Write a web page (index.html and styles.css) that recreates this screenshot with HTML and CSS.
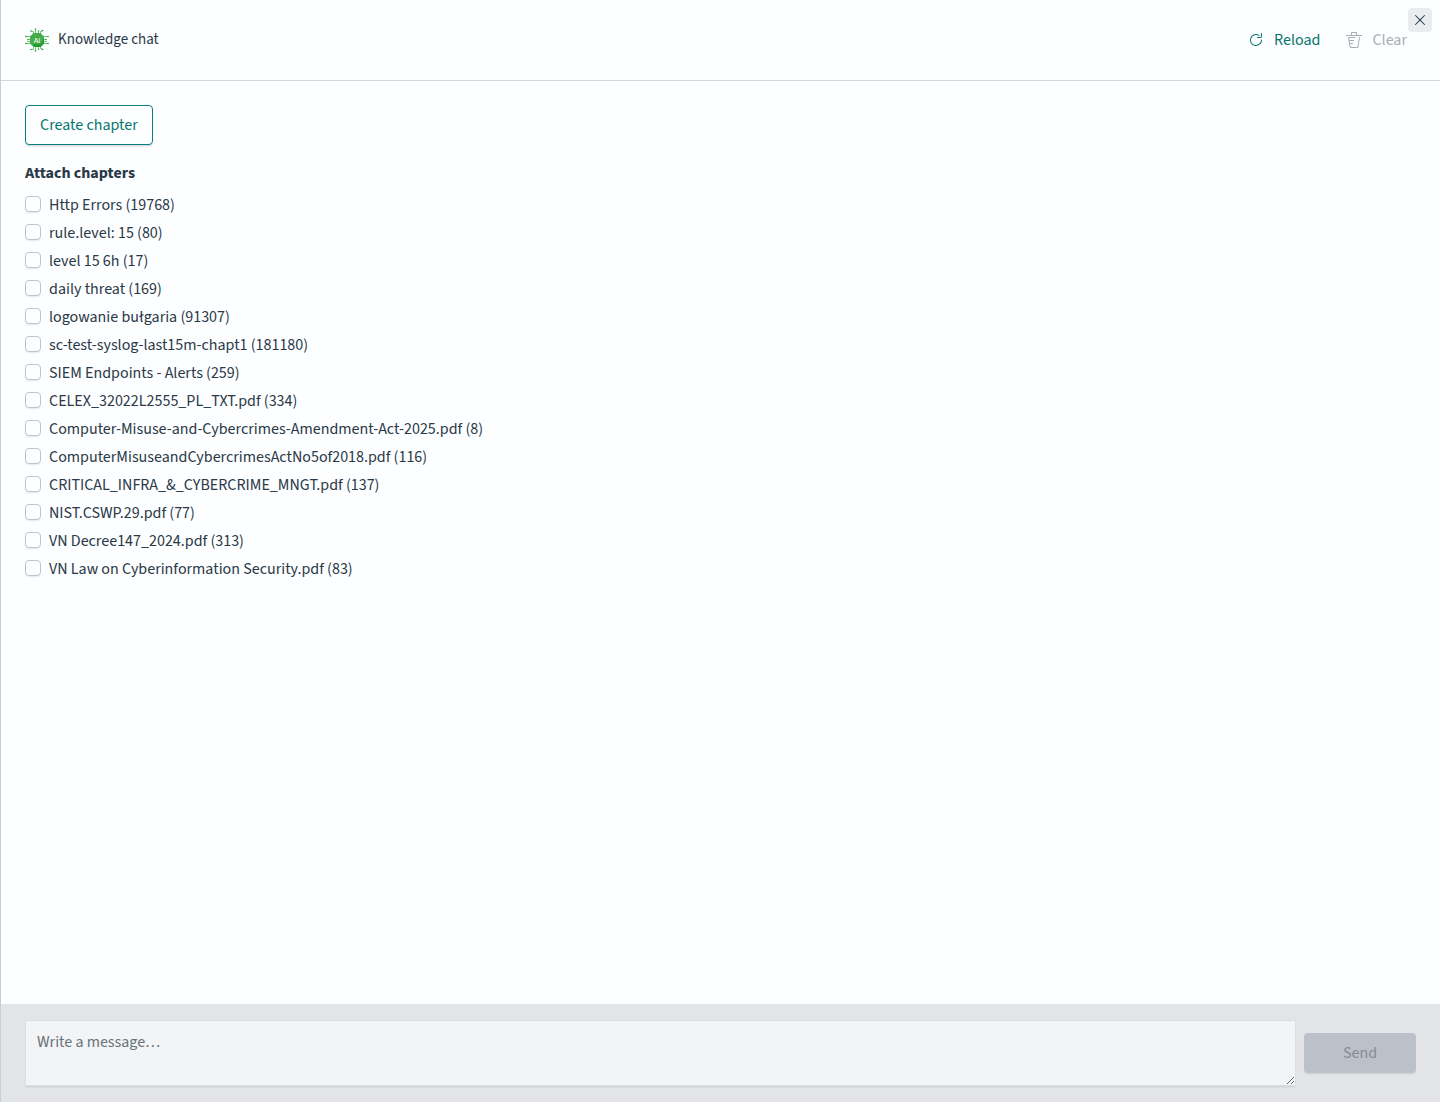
FILE: index.html
```html
<!DOCTYPE html>
<html lang="en">
<head>
  <meta charset="UTF-8" />
  <meta name="viewport" content="width=device-width, initial-scale=1" />
  <title>Knowledge chat</title>
  <link rel="stylesheet" href="styles.css">
</head>
<body>

<div class="flyout">
  <button type="button" class="close" aria-label="Close">
    <svg width="16" height="16" viewBox="0 0 16 16" fill="currentColor"><path d="M7.293 8 3.146 3.854a.5.5 0 1 1 .708-.708L8 7.293l4.146-4.147a.5.5 0 0 1 .708.708L8.707 8l4.147 4.146a.5.5 0 0 1-.708.708L8 8.707l-4.146 4.147a.5.5 0 0 1-.708-.708L7.293 8z"/></svg>
  </button>

  <header>
    <svg class="logo" width="24" height="24" viewBox="0 0 24 24" aria-hidden="true">
      <g fill="none" stroke="#4fb558" stroke-width=".8">
        <path d="M10.500 6V1M13.500 6V3.500M8.500 6V3.500H6.500M15.500 6V3.500H17V2"/>
        <path d="M10.500 18v5M13.500 18v2.500M8.500 18v3.500H6.500M15.500 18v2.500H17V22"/>
        <path d="M0 8.500h6M3 11.500h3M2 13.500h4M6 15.500H1"/>
        <path d="M18 8.500h5M18 11.500h3M18 13.500h4M18 15.500h5"/>
      </g>
      <g fill="#2c9a3a">
        <circle cx="10.500" cy="1" r=".8"/><circle cx="13.500" cy="3" r=".8"/><circle cx="6" cy="3" r=".8"/><circle cx="17.500" cy="2.500" r=".8"/>
        <circle cx="10.500" cy="23" r=".8"/><circle cx="13.500" cy="21" r=".8"/><circle cx="6" cy="21.500" r=".8"/><circle cx="17.500" cy="21.500" r=".8"/>
        <circle cx="1" cy="8.500" r=".8"/><circle cx="3" cy="11.500" r=".8"/><circle cx="1" cy="15.500" r=".8"/>
        <circle cx="23" cy="8.500" r=".8"/><circle cx="21" cy="11.500" r=".8"/><circle cx="23" cy="15.500" r=".8"/>
      </g>
      <path fill="#45ad49" d="M8.500 5h7L19 8.500v7L15.500 19h-7L5 15.500v-7z"/>
      <path fill="#239a35" d="M19 10v5.500L15.500 19H10l-2-3h8z"/>
      <text class="logo-text" x="12" y="15" text-anchor="middle">AI</text>
    </svg>
    <h1>Knowledge chat</h1>
    <div class="actions">
      <button type="button" class="btn-empty">
        <svg width="16" height="16" viewBox="0 0 16 16" fill="currentColor"><path d="M11.228 2.942a.5.5 0 1 1-.538.842A5 5 0 1 0 13 8a.5.5 0 1 1 1 0 6 6 0 1 1-2.772-5.058zM14 1.500v3A1.500 1.500 0 0 1 12.500 6h-3a.5.5 0 0 1 0-1h3a.5.5 0 0 0 .5-.5v-3a.5.5 0 1 1 1 0z"/></svg>
        Reload
      </button>
      <button type="button" class="btn-empty" disabled>
        <svg width="16" height="16" viewBox="0 0 16 16" fill="currentColor"><path d="M11 3h5v1H0V3h5V1a1 1 0 0 1 1-1h4a1 1 0 0 1 1 1v2zm-7.056 8H7v1H4.100l.392 2.519c.042.269.254.458.493.458h6.030c.239 0 .451-.189.493-.458l1.498-9.576H14l-1.504 9.730c-.116.747-.740 1.304-1.481 1.304h-6.030c-.741 0-1.365-.557-1.481-1.304l-1.511-9.730H9V5.950H3.157L3.476 8H8v1H3.632l.312 2zM6 3h4V1H6v2z"/></svg>
        Clear
      </button>
    </div>
  </header>

  <main>
    <button type="button" class="btn-outline">Create chapter</button>

    <fieldset class="chapters">
      <legend>Attach chapters</legend>
      <label><input type="checkbox" />Http Errors (19768)</label>
      <label><input type="checkbox" />rule.level: 15 (80)</label>
      <label><input type="checkbox" />level 15 6h (17)</label>
      <label><input type="checkbox" />daily threat (169)</label>
      <label><input type="checkbox" />logowanie bułgaria (91307)</label>
      <label><input type="checkbox" />sc-test-syslog-last15m-chapt1 (181180)</label>
      <label><input type="checkbox" />SIEM Endpoints - Alerts (259)</label>
      <label><input type="checkbox" />CELEX_32022L2555_PL_TXT.pdf (334)</label>
      <label><input type="checkbox" />Computer-Misuse-and-Cybercrimes-Amendment-Act-2025.pdf (8)</label>
      <label><input type="checkbox" />ComputerMisuseandCybercrimesActNo5of2018.pdf (116)</label>
      <label><input type="checkbox" />CRITICAL_INFRA_&amp;_CYBERCRIME_MNGT.pdf (137)</label>
      <label><input type="checkbox" />NIST.CSWP.29.pdf (77)</label>
      <label><input type="checkbox" />VN Decree147_2024.pdf (313)</label>
      <label><input type="checkbox" />VN Law on Cyberinformation Security.pdf (83)</label>
    </fieldset>
  </main>

  <footer>
    <textarea aria-label="Message" placeholder="Write a message…"></textarea>
    <button type="submit" class="btn-send" disabled>Send</button>
  </footer>
</div>

</body>
</html>
```
FILE: styles.css
```css
* { box-sizing: border-box; }
body { margin: 0; background: #fdfeff; color: #2a3947; }
body, button, textarea {
  font-family: "Source Sans 3", "Noto Sans CJK SC", "Noto Sans", sans-serif;
  font-size: 16px; line-height: 20px;
}
button { cursor: pointer; }
button:disabled { cursor: not-allowed; }

.flyout {
  position: relative; display: flex; flex-direction: column;
  min-height: 100vh; border-left: 1px solid #c6cdd6;
}
.close {
  position: absolute; top: 8px; right: 8px; width: 24px; height: 24px;
  display: flex; align-items: center; justify-content: center;
  padding: 0; border: none; border-radius: 4px; background: #eaedf0; color: #2a3947;
}

header {
  display: flex; align-items: center; height: 81px;
  padding: 0 24px; border-bottom: 1px solid #d3d6dc;
}
.logo-text { font: 7px "Liberation Sans", sans-serif; fill: #fff; }
h1 { margin: 0 0 0 9px; font-size: 15px; font-weight: 400; }
.actions { display: flex; gap: 8px; margin-left: auto; }
.btn-empty {
  display: flex; align-items: center; gap: 10px; height: 40px;
  padding: 0 9px; border: none; background: none; color: #07776d;
}
.btn-empty:disabled { color: #a9adb4; }

main { flex: 1; padding: 24px; }
.btn-outline {
  height: 40px; padding: 0 14px; border: 1px solid #07827e; border-radius: 4px;
  background: #fdfeff; color: #07776d; box-shadow: 0 2px 2px -1px rgba(0, 0, 0, .2);
}
.chapters { margin: 16px 0 0; padding: 0; border: none; }
.chapters legend { margin-bottom: 8px; padding: 0; font-weight: 700; line-height: 24px; }
.chapters label { display: flex; align-items: center; gap: 8px; width: max-content; height: 24px; margin-bottom: 4px; }
.chapters input {
  appearance: none; width: 16px; height: 16px; margin: 0 0 2px;
  border: 1px solid #c0c3c9; border-radius: 4px; background: #fdfeff;
  box-shadow: 0 2px 2px -1px rgba(0, 0, 0, .1);
}
.chapters input:checked { background: #07827e; border-color: #07827e; }

footer { display: flex; align-items: center; gap: 8px; padding: 16px 24px; background: #e2e4e8; }
textarea {
  flex: 1; height: 66px; padding: 11px; border: 1px solid #d8e0e5; border-radius: 0;
  background: #f3f4f6; color: #2a3947; resize: vertical;
  box-shadow: 0 2px 2px -1px rgba(0, 0, 0, .1);
}
textarea::placeholder { color: #69727b; opacity: 1; }
.btn-send {
  width: 112px; height: 40px; border: none; border-radius: 4px;
  background: #bcc1c9; color: #868c94; box-shadow: 0 2px 2px -1px rgba(0, 0, 0, .1);
}
```
